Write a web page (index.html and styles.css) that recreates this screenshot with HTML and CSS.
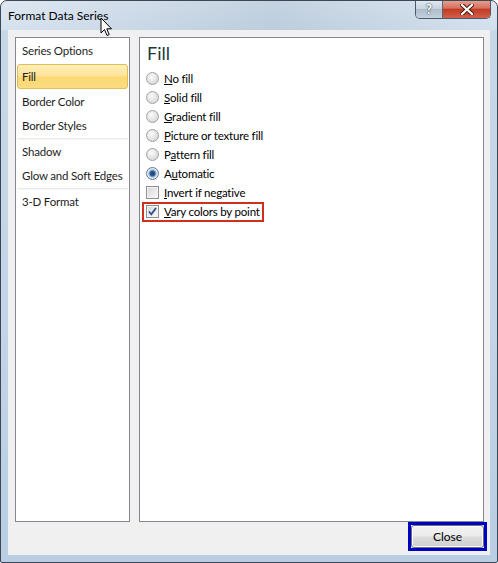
FILE: index.html
```html
<!DOCTYPE html>
<html lang="en">
<head>
    <meta charset="UTF-8">
    <title>Format Data Series</title>
    <link rel="stylesheet" href="styles.css">
</head>
<body>
    <div class="window">
        <div class="titlebar">
            <span class="title">Format Data Series</span>
            <div class="caption-buttons">
                <span class="btn-help">?</span>
                <span class="btn-close">
                    <svg width="14" height="11" viewBox="0 0 14 11">
                        <path d="M2 1 L12 10 M12 1 L2 10" stroke="#4a1a12" stroke-width="4.2" stroke-linecap="square"/>
                        <path d="M2 1 L12 10 M12 1 L2 10" stroke="#ffffff" stroke-width="2.2" stroke-linecap="square"/>
                    </svg>
                </span>
            </div>
        </div>
        <div class="client">
            <div class="panes">
                <div class="nav">
                    <div class="nav-item">Series Options</div>
                    <div class="nav-item active">Fill</div>
                    <div class="nav-item">Border Color</div>
                    <div class="nav-item">Border Styles</div>
                    <div class="nav-sep"></div>
                    <div class="nav-item">Shadow</div>
                    <div class="nav-item">Glow and Soft Edges</div>
                    <div class="nav-sep"></div>
                    <div class="nav-item">3-D Format</div>
                </div>
                <div class="content">
                    <h2 class="heading">Fill</h2>
                    <div class="option"><span class="radio"></span><span><u>N</u>o fill</span></div>
                    <div class="option"><span class="radio"></span><span><u>S</u>olid fill</span></div>
                    <div class="option"><span class="radio"></span><span><u>G</u>radient fill</span></div>
                    <div class="option"><span class="radio"></span><span><u>P</u>icture or texture fill</span></div>
                    <div class="option"><span class="radio"></span><span>P<u>a</u>ttern fill</span></div>
                    <div class="option"><span class="radio checked"></span><span>A<u>u</u>tomatic</span></div>
                    <div class="option"><span class="check"></span><span><u>I</u>nvert if negative</span></div>
                    <div class="option">
                        <span class="marked">
                            <span class="check">
                                <svg width="11" height="11" viewBox="0 0 11 11">
                                    <path d="M2 5.5 L4.3 8.3 L9 2" fill="none" stroke="#2d4f8e" stroke-width="1.8"/>
                                </svg>
                            </span>
                            <span><u>V</u>ary colors by point</span>
                        </span>
                    </div>
                </div>
            </div>
            <div class="footer">
                <div class="focus-box">
                    <button class="close-btn">Close</button>
                </div>
            </div>
        </div>
        <svg class="cursor" width="13" height="20" viewBox="0 0 13 20">
            <path d="M1 1 L1 16 L4.5 12.5 L7 18.5 L9.2 17.6 L6.8 11.8 L11.5 11.8 Z" fill="#ffffff" stroke="#000000" stroke-width="1" stroke-linejoin="miter"/>
        </svg>
    </div>
</body>
</html>
```

FILE: styles.css
```css
body {
    margin: 0;
    padding: 0;
    font-family: 'Lato', 'Open Sans', sans-serif;
    font-size: 11.5px;
    letter-spacing: -0.2px;
    color: #000;
    background: #ffffff;
}
.window {
    position: relative;
    width: 498px;
    height: 563px;
    box-sizing: border-box;
    border: 1px solid #3c4756;
    border-radius: 7px 7px 2px 2px;
    background: linear-gradient(180deg, #d2dfec 0%, #c6d7e8 6%, #c2d4e7 60%, #b9cee3 100%);
    display: flex;
    flex-direction: column;
    overflow: hidden;
}
.titlebar {
    height: 29px;
    display: flex;
    align-items: flex-start;
    justify-content: space-between;
    background: linear-gradient(90deg, rgba(255,255,255,0.25), rgba(120,140,160,0.15) 55%, rgba(255,255,255,0.2));
}
.title {
    margin: 6px 0 0 7px;
    font-size: 12px;
    letter-spacing: 0;
    line-height: 18px;
}
.caption-buttons {
    display: flex;
    margin-right: 6px;
    margin-top: -1px;
    border: 1px solid #4d5968;
    border-top: none;
    border-radius: 0 0 5px 5px;
    overflow: hidden;
}
.btn-help {
    width: 26px;
    height: 18px;
    display: flex;
    align-items: center;
    justify-content: center;
    font-size: 13px;
    font-weight: bold;
    color: #ffffff;
    text-shadow: 0 0 2px #3c4a5a, 0 0 1px #3c4a5a;
    background: linear-gradient(180deg, #e4ebf2 0%, #c6d2de 50%, #aebdcc 52%, #c4d1de 100%);
    border-right: 1px solid #5b6676;
}
.btn-close {
    width: 47px;
    height: 18px;
    display: flex;
    align-items: center;
    justify-content: center;
    background: linear-gradient(180deg, #e6a596 0%, #d7705d 45%, #c23a22 52%, #d1614a 100%);
}
.client {
    flex: 1;
    margin: 0 7px 7px 7px;
    padding: 7px 6px 0 7px;
    background: #f0f0f0;
    display: flex;
    flex-direction: column;
}
.panes {
    height: 485px;
    display: flex;
    gap: 9px;
}
.nav {
    width: 115px;
    box-sizing: border-box;
    background: #ffffff;
    border: 1px solid #828790;
    padding: 1px 1px;
}
.nav-item {
    height: 24px;
    line-height: 24px;
    padding: 0 5px;
    color: #1e1e1e;
    white-space: nowrap;
}
.nav-item.active {
    height: 25px;
    box-sizing: border-box;
    margin: 1px 0;
    padding: 0 4px;
    line-height: 23px;
    border: 1px solid #e2bc57;
    border-radius: 3px;
    background: linear-gradient(180deg, #fef0b8 0%, #fde49a 45%, #fbd873 55%, #fbdc80 100%);
}
.nav-sep {
    height: 2px;
    background: #e9eaeb;
    border-bottom: 1px solid #f7f7f7;
    box-sizing: border-box;
}
.content {
    flex: 1;
    box-sizing: border-box;
    background: #ffffff;
    border: 1px solid #828790;
    padding: 0 6px;
}
.heading {
    margin: 4px 0 5px 1px;
    font-size: 18px;
    letter-spacing: 0;
    line-height: 22px;
    font-weight: normal;
    color: #22393c;
}
.option {
    height: 19px;
    display: flex;
    align-items: center;
    gap: 5px;
    white-space: nowrap;
}
.radio {
    width: 13px;
    height: 13px;
    box-sizing: border-box;
    border-radius: 50%;
    border: 1px solid #9ea2a6;
    background: radial-gradient(circle at 40% 35%, #fbfbfb 0%, #e6e6e6 45%, #cdcfd1 100%);
}
.radio.checked {
    border-color: #5f7a99;
    background: radial-gradient(circle at 50% 50%, #1d3f6e 0%, #2d5c92 30%, #7ea4cc 42%, #e9eef4 60%, #d6dbe1 100%);
}
.check {
    width: 13px;
    height: 13px;
    box-sizing: border-box;
    border: 1px solid #8e8f8f;
    background: linear-gradient(135deg, #d2d2d2 0%, #ebebeb 55%, #f9f9f9 100%);
    box-shadow: inset 0 0 0 1px #f4f4f4;
    display: flex;
    align-items: center;
    justify-content: center;
}
.marked {
    display: inline-flex;
    align-items: center;
    gap: 5px;
    height: 16px;
    margin-left: -2px;
    padding: 0 2px;
    outline: 2px solid #cf2f1c;
}
.footer {
    flex: 1;
    display: flex;
    justify-content: flex-end;
    align-items: flex-start;
}
.focus-box {
    border: 3px solid #0000c4;
    margin-right: -3px;
    display: flex;
}
.close-btn {
    width: 73px;
    height: 23px;
    font-family: 'Lato', 'Open Sans', sans-serif;
    font-size: 12px;
    color: #000;
    border: 1px solid #707070;
    border-radius: 3px;
    background: linear-gradient(180deg, #f2f2f2 0%, #ebebeb 49%, #dddddd 51%, #cfcfcf 100%);
    box-shadow: inset 0 0 0 1px #fcfcfc;
    padding: 0;
}
.cursor {
    position: absolute;
    left: 99px;
    top: 16px;
}
```
